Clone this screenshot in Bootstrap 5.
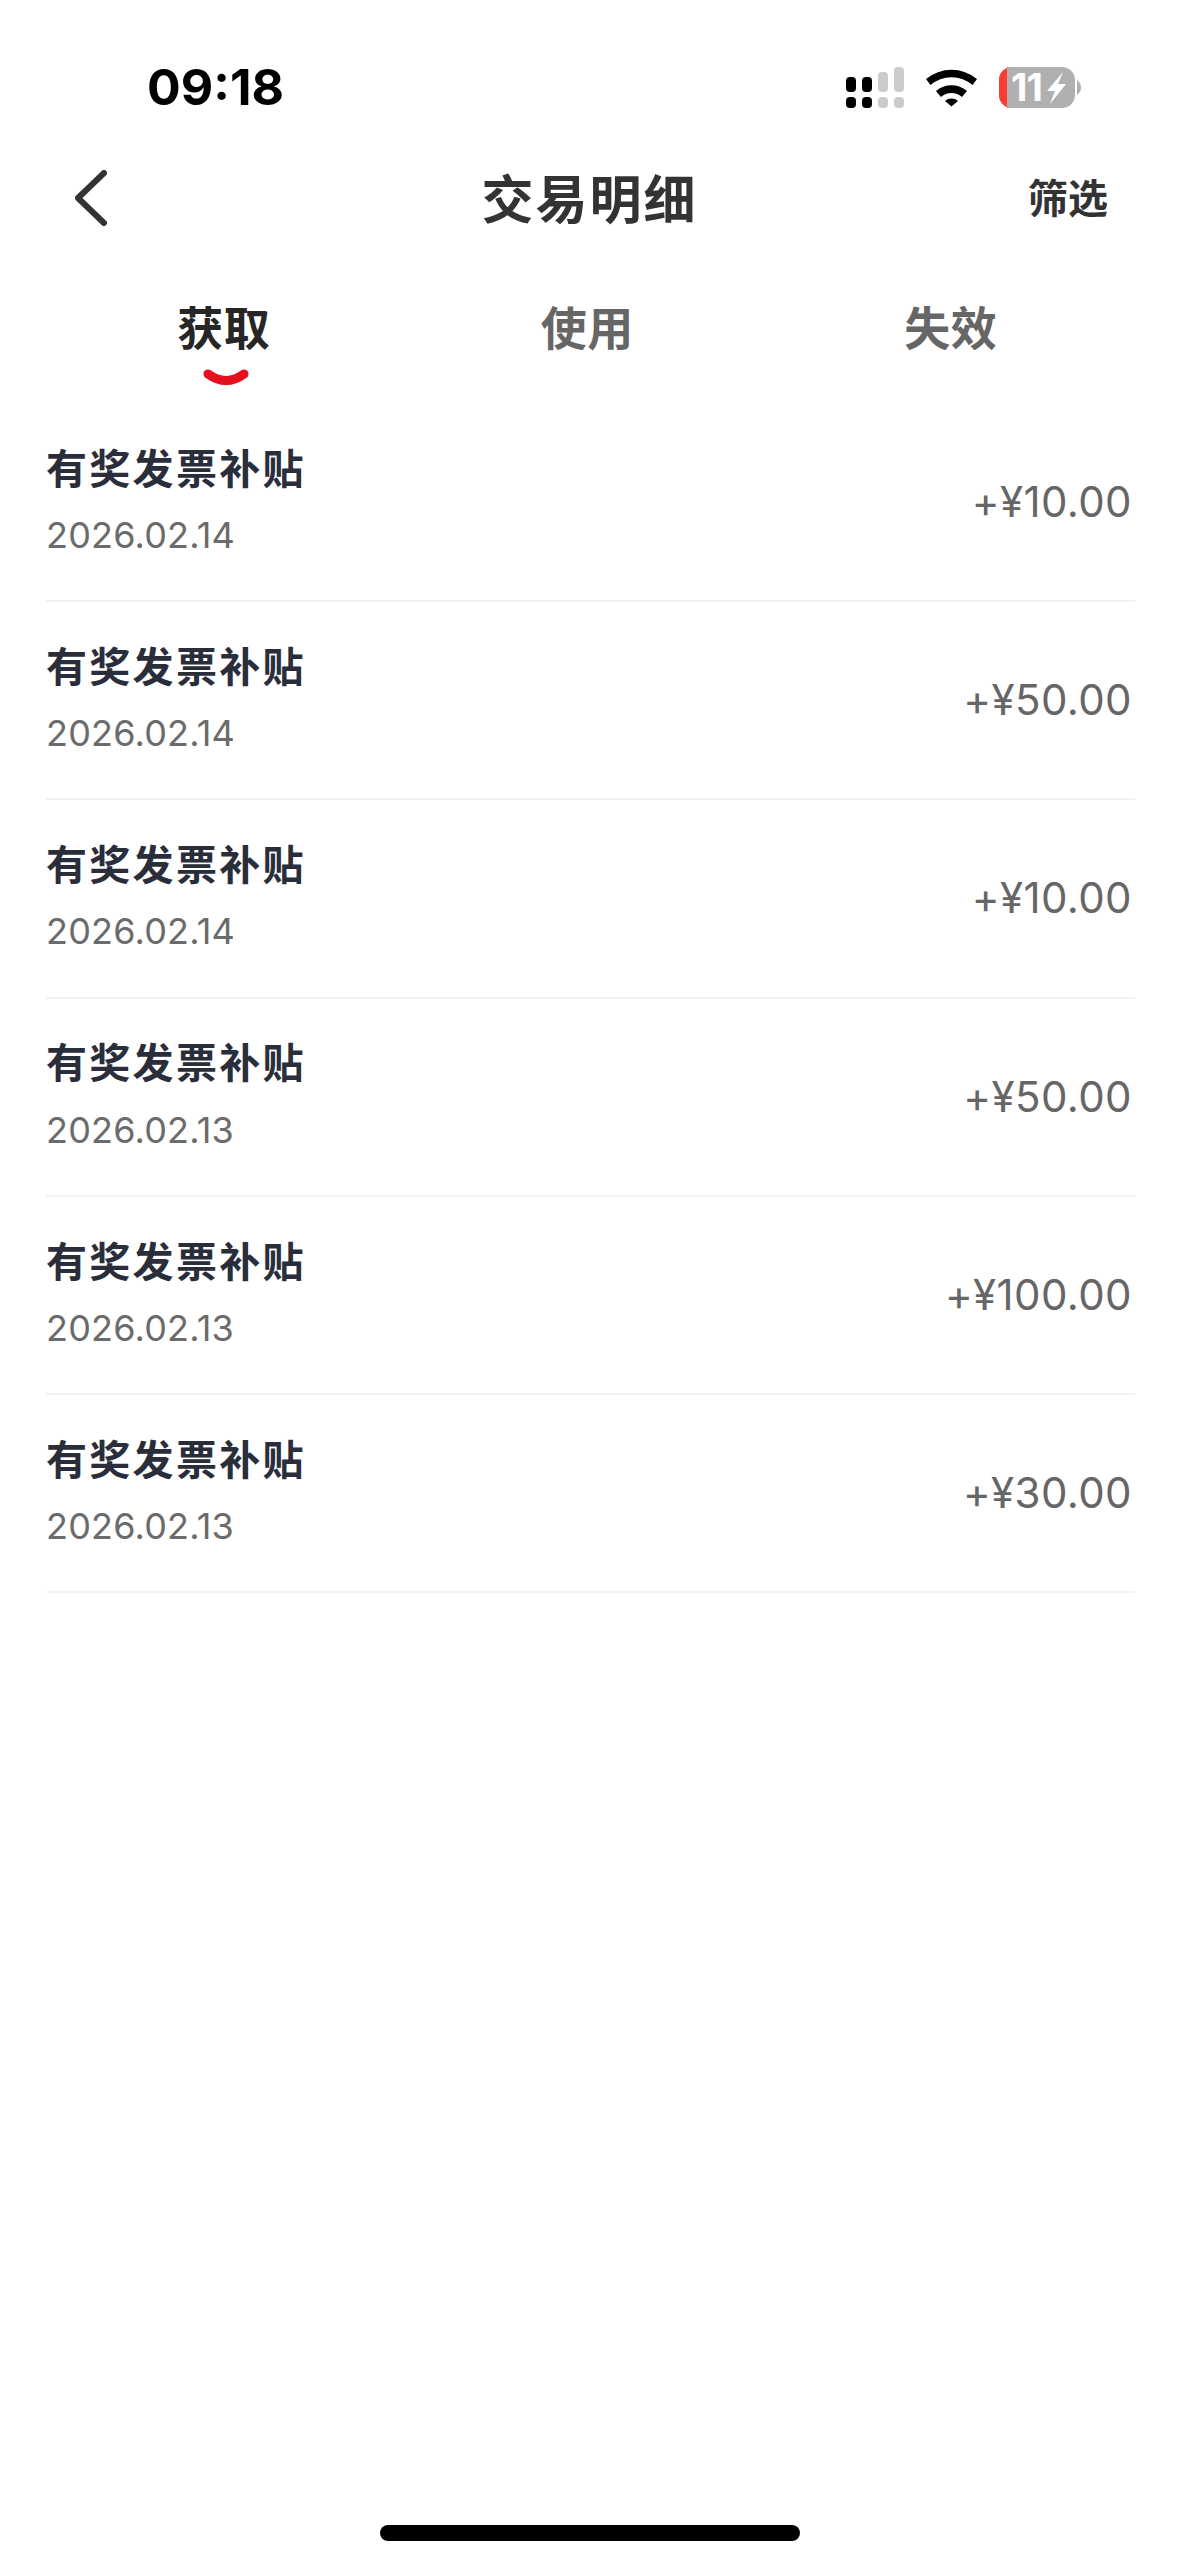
<!DOCTYPE html>
<html lang="zh">
<head>
    <meta charset="UTF-8">
    <meta name="viewport" content="width=device-width, initial-scale=1.0">
    <title>交易明细</title>
    <link href="https://cdn.jsdelivr.net/npm/bootstrap@5.3.3/dist/css/bootstrap.min.css" rel="stylesheet">
    <style>
        body {
            font-family: "Noto Sans CJK SC", Roboto, sans-serif;
            background-color: #fff;
            width: 1179px;
            height: 2556px;
            overflow: hidden;
        }

        .phone-status {
            height: 134px;
            padding: 36px 93px 0 147px;
        }

        .clock {
            font-family: Inter, sans-serif;
            font-size: 50px;
            font-weight: 700;
            line-height: 1;
            color: #000;
            padding-top: 4px;
        }

        .status-icons {
            margin-top: 10px;
        }

        .title-bar {
            height: 128px;
            padding: 0 71px;
        }

        .bar-side {
            flex: 1 1 0;
        }

        .back-icon {
            margin-left: 4px;
        }

        .title-text {
            font-size: 52px;
            font-weight: 700;
            letter-spacing: 2px;
            color: #333;
            line-height: 1;
            margin-bottom: 3px;
        }

        .filter-text {
            font-size: 40px;
            font-weight: 700;
            color: #333;
            line-height: 1;
            margin-bottom: 4px;
        }

        .tab-strip {
            height: 142px;
            padding: 0 0 0 42px;
        }

        .tab-cell {
            width: 363.5px;
            height: 142px;
            padding-top: 36px;
            font-size: 46px;
            letter-spacing: .5px;
            line-height: 1.2;
            font-weight: 700;
            color: #666;
        }

        .tab-cell.is-active {
            color: #262626;
        }

        .tab-smile {
            top: 107px;
            left: 50%;
            margin-left: -21px;
        }

        .entry-list {
            margin: 0 44px 0 46px;
        }

        .entry-row {
            height: 198.2px;
            border-bottom: 2px solid #f2f2f2;
            padding-right: 3px;
        }

        .entry-info {
            margin-bottom: 5px;
        }

        .entry-name {
            font-size: 41px;
            font-weight: 700;
            letter-spacing: 2.3px;
            color: #2a2e3b;
            line-height: 1.2;
        }

        .entry-date {
            font-family: Inter, sans-serif;
            font-size: 36px;
            letter-spacing: .2px;
            color: #6b6b6b;
            line-height: 1.2;
            margin-top: 23px;
        }

        .entry-amount {
            font-family: Inter, sans-serif;
            font-size: 42px;
            letter-spacing: .4px;
            color: #666;
            line-height: 1;
        }

        .home-bar {
            bottom: 15px;
            left: 380px;
            width: 420px;
            height: 16px;
            background-color: #000;
        }
    </style>
</head>
<body class="position-relative">
    <!-- Status bar -->
    <div class="phone-status d-flex align-items-center justify-content-between">
        <div class="clock">09:18</div>
        <div class="status-icons d-flex align-items-center">
            <svg width="240" height="60" viewBox="0 0 240 60">
                <!-- signal -->
                <rect x="0" y="17" width="10" height="15" rx="4" fill="#000"/>
                <rect x="0" y="37" width="10" height="11" rx="4" fill="#000"/>
                <rect x="16" y="17" width="10" height="15" rx="4" fill="#000"/>
                <rect x="16" y="37" width="10" height="11" rx="4" fill="#000"/>
                <rect x="32" y="12" width="10" height="20" rx="4" fill="#ccc"/>
                <rect x="32" y="37" width="10" height="11" rx="4" fill="#ccc"/>
                <rect x="48" y="7" width="10" height="25" rx="4" fill="#ccc"/>
                <rect x="48" y="37" width="10" height="11" rx="4" fill="#ccc"/>
                <!-- wifi -->
                <path d="M80 19 a40 40 0 0 1 51 0 l-4.500 6 a32 32 0 0 0 -42 0z" fill="#000"/>
                <path d="M90 31 a24 24 0 0 1 31 0 l-5 6 a16 16 0 0 0 -21 0z" fill="#000"/>
                <path d="M99 41 a10 10 0 0 1 13 0 l-6.500 5.500z" fill="#000"/>
                <!-- battery -->
                <rect x="153" y="7" width="76" height="41" rx="13" fill="#b0b0b0"/>
                <path d="M166 7 a13 13 0 0 0 -13 13 v15 a13 13 0 0 0 13 13 h-5 v-41z" fill="#ff3b30"/>
                <path d="M231 20 a9 9 0 0 1 0 15z" fill="#b0b0b0"/>
                <text x="165" y="41" font-family="Inter, sans-serif" font-size="38" font-weight="700" letter-spacing="-1" fill="#fff">11</text>
                <path d="M217 12 201 31 h8 l-5 13 16 -20 h-8z" fill="#fff"/>
            </svg>
        </div>
    </div>

    <!-- Title -->
    <div class="title-bar d-flex align-items-center">
        <div class="bar-side d-flex">
            <svg class="back-icon" width="32" height="56" viewBox="0 0 32 56" fill="none" stroke="#333" stroke-width="6" stroke-linecap="round" stroke-linejoin="round"><path d="M29 3 3 28 29 53"/></svg>
        </div>
        <div class="title-text">交易明细</div>
        <div class="bar-side d-flex justify-content-end">
            <div class="filter-text">筛选</div>
        </div>
    </div>

    <!-- Tabs -->
    <div class="tab-strip d-flex">
        <div class="tab-cell is-active text-center position-relative">获取
            <svg class="tab-smile position-absolute" width="46" height="20" viewBox="0 0 46 20" fill="none" stroke="#e60f1e" stroke-width="9" stroke-linecap="round"><path d="M5 5 Q23 18 41 5"/></svg>
        </div>
        <div class="tab-cell text-center">使用</div>
        <div class="tab-cell text-center">失效</div>
    </div>

    <!-- Rows -->
    <div class="entry-list" id="rows"></div>

    <div class="home-bar position-absolute rounded-pill"></div>

    <script src="https://cdn.jsdelivr.net/npm/bootstrap@5.3.3/dist/js/bootstrap.bundle.min.js"></script>
    <script>
        const entries = [
            ["2026.02.14", "+¥10.00"],
            ["2026.02.14", "+¥50.00"],
            ["2026.02.14", "+¥10.00"],
            ["2026.02.13", "+¥50.00"],
            ["2026.02.13", "+¥100.00"],
            ["2026.02.13", "+¥30.00"]
        ];
        document.getElementById("rows").innerHTML = entries.map(e => `
            <div class="entry-row d-flex align-items-center justify-content-between">
                <div class="entry-info">
                    <div class="entry-name">有奖发票补贴</div>
                    <div class="entry-date">${e[0]}</div>
                </div>
                <div class="entry-amount">${e[1]}</div>
            </div>`).join("");
    </script>
</body>
</html>
